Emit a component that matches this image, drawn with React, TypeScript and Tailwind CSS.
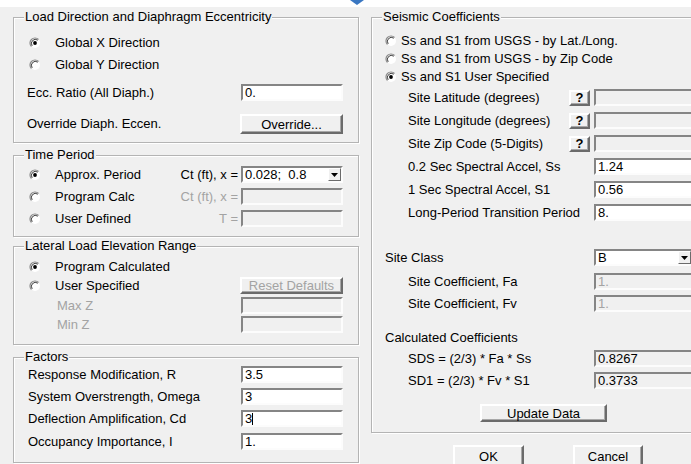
import type { ReactNode } from 'react';

// classic 3D radio button
function Radio({ checked = false }: { checked?: boolean }) {
  return (
    <svg width="12" height="12" viewBox="0 0 12 12" className="shrink-0">
      <circle cx="6" cy="6" r="5" fill="#fff" />
      <path d="M9.54 2.46A5 5 0 0 0 2.46 9.54" fill="none" stroke="#8a8a8a" strokeWidth="1.2" />
      <path d="M8.8 3.2A4 4 0 0 0 3.2 8.8" fill="none" stroke="#404040" strokeWidth="1" />
      {checked && <circle cx="6" cy="6" r="1.9" fill="#000" />}
    </svg>
  );
}

function GroupBox({ title, className, children }: { title: string; className: string; children: ReactNode }) {
  return (
    <fieldset className={`border border-[#b4b4b4] shadow-[inset_1px_1px_0_#fff,1px_1px_0_#fff] px-[10px] ${className}`}>
      <legend className="px-[1px] h-[14px] leading-[14px] bg-[#f0f0f0]">{title}</legend>
      {children}
    </fieldset>
  );
}

function Field({ value = '', disabled = false, width, caret = false }: { value?: string; disabled?: boolean; width: string; caret?: boolean }) {
  return (
    <div
      className={`${width} h-[17px] shrink-0 border-2 border-t-[#858585] border-l-[#858585] border-b-[#fcfcfc] border-r-[#fcfcfc] px-[2px] text-[13px] leading-[13px] flex items-center ${
        disabled ? 'bg-[#f0f0f0] text-[#a3a3a3]' : 'bg-white text-black'
      }`}
    >
      <span>{value}</span>
      {caret && <span className="w-px h-[12px] bg-black" />}
    </div>
  );
}

function Combo({ value, width }: { value: string; width: string }) {
  return (
    <div className={`${width} h-[17px] shrink-0 border-2 border-t-[#858585] border-l-[#858585] border-b-[#fcfcfc] border-r-[#fcfcfc] bg-white flex items-stretch`}>
      <span className="flex-1 pl-[2px] text-[13px] leading-[13px] whitespace-pre">{value}</span>
      <span className="w-[13px] border border-t-white border-l-white border-b-[#6b6b6b] border-r-[#6b6b6b] bg-[#f0f0f0] flex items-center justify-center">
        <svg width="7" height="4" viewBox="0 0 7 4">
          <path d="M0 0H7L3.5 4Z" fill="#000" />
        </svg>
      </span>
    </div>
  );
}

function Button({ label, className, disabled = false }: { label: string; className: string; disabled?: boolean }) {
  return (
    <button
      className={`shrink-0 border-2 border-t-white border-l-white border-b-[#6b6b6b] border-r-[#6b6b6b] shadow-[inset_-1px_-1px_0_#a8a8a8] bg-[#f0f0f0] text-[13px] leading-none flex items-center justify-center ${
        disabled ? 'text-[#a3a3a3]' : 'text-black'
      } ${className}`}
    >
      {label}
    </button>
  );
}

export default function App() {
  return (
    <div className="w-[691px] h-[464px] overflow-hidden bg-[#f0f0f0] text-[13px] text-black font-['Liberation_Sans',Arial,sans-serif] flex flex-col">
      {/* strip above the dialog */}
      <div className="h-[7px] shrink-0 bg-white pl-[350px]">
        <svg width="14" height="5" viewBox="0 0 14 5" className="block">
          <path d="M0 0H14L7 5Z" fill="#3a77c2" />
        </svg>
      </div>

      <div className="flex shrink-0">
        {/* left column */}
        <div className="ml-[13px] w-[346px] shrink-0 flex flex-col">
          <GroupBox title="Load Direction and Diaphragm Eccentricity" className="mt-[3px] pt-[10px] pb-[8px]">
            <div className="pl-[3px] pr-[5px] flex flex-col">
              <div className="h-[18px] flex items-center pl-[2px] gap-[14px]">
                <Radio checked />
                <span>Global X Direction</span>
              </div>
              <div className="h-[18px] mt-[4px] flex items-center pl-[2px] gap-[14px]">
                <Radio />
                <span>Global Y Direction</span>
              </div>
              <div className="h-[17px] mt-[10px] flex items-center justify-between">
                <span>Ecc. Ratio (All Diaph.)</span>
                <Field value="0." width="w-[102px]" />
              </div>
              <div className="h-[20px] mt-[13px] flex items-center justify-between">
                <span>Override Diaph. Eccen.</span>
                <Button label="Override..." className="w-[103px] h-[20px]" />
              </div>
            </div>
          </GroupBox>

          <GroupBox title="Time Period" className="mt-[5px] pt-[4px] pb-[9px]">
            <div className="pl-[3px] pr-[5px] flex flex-col">
              <div className="h-[17px] flex items-center pl-[2px]">
                <Radio checked />
                <span className="ml-[14px] flex-1">Approx. Period</span>
                <span className="mr-[3px]">Ct (ft), x =</span>
                <Combo value="0.028;  0.8" width="w-[102px]" />
              </div>
              <div className="h-[17px] mt-[5px] flex items-center pl-[2px]">
                <Radio />
                <span className="ml-[14px] flex-1">Program Calc</span>
                <span className="mr-[3px] text-[#a3a3a3]">Ct (ft), x =</span>
                <Field disabled width="w-[102px]" />
              </div>
              <div className="h-[17px] mt-[5px] flex items-center pl-[2px]">
                <Radio />
                <span className="ml-[14px] flex-1">User Defined</span>
                <span className="mr-[3px] text-[#a3a3a3]">T =</span>
                <Field disabled width="w-[102px]" />
              </div>
            </div>
          </GroupBox>

          <GroupBox title="Lateral Load Elevation Range" className="mt-[2px] pt-[5px] pb-[11px]">
            <div className="pl-[3px] pr-[5px] flex flex-col">
              <div className="h-[17px] flex items-center pl-[2px] gap-[14px]">
                <Radio checked />
                <span>Program Calculated</span>
              </div>
              <div className="h-[17px] mt-[2px] flex items-center pl-[2px]">
                <Radio />
                <span className="ml-[14px] flex-1">User Specified</span>
                <Button label="Reset Defaults" disabled className="w-[103px] h-[17px]" />
              </div>
              <div className="h-[17px] mt-[3px] flex items-center justify-between">
                <span className="ml-[30px] text-[#a3a3a3]">Max Z</span>
                <Field disabled width="w-[102px]" />
              </div>
              <div className="h-[17px] mt-[2px] flex items-center justify-between">
                <span className="ml-[30px] text-[#a3a3a3]">Min Z</span>
                <Field disabled width="w-[102px]" />
              </div>
            </div>
          </GroupBox>

          <GroupBox title="Factors" className="mt-[5px] pt-[2px] pb-[12px]">
            <div className="pl-[4px] pr-[5px] flex flex-col">
              <div className="h-[17px] flex items-center justify-between">
                <span>Response Modification, R</span>
                <Field value="3.5" width="w-[102px]" />
              </div>
              <div className="h-[17px] mt-[5px] flex items-center justify-between">
                <span>System Overstrength, Omega</span>
                <Field value="3" width="w-[102px]" />
              </div>
              <div className="h-[17px] mt-[5px] flex items-center justify-between">
                <span>Deflection Amplification, Cd</span>
                <Field value="3" caret width="w-[102px]" />
              </div>
              <div className="h-[17px] mt-[6px] flex items-center justify-between">
                <span>Occupancy Importance, I</span>
                <Field value="1." width="w-[102px]" />
              </div>
            </div>
          </GroupBox>
        </div>

        {/* right column */}
        <div className="ml-[12px] w-[345px] shrink-0 flex flex-col">
          <GroupBox title="Seismic Coefficients" className="mt-[3px] pt-[8px] pb-[10px]">
            <div className="flex flex-col">
              <div className="h-[17px] flex items-center pl-[3px] gap-[4px]">
                <Radio />
                <span>Ss and S1 from USGS - by Lat./Long.</span>
              </div>
              <div className="h-[17px] mt-[1px] flex items-center pl-[3px] gap-[4px]">
                <Radio />
                <span>Ss and S1 from USGS - by Zip Code</span>
              </div>
              <div className="h-[17px] mt-[1px] flex items-center pl-[3px] gap-[4px]">
                <Radio checked />
                <span>Ss and S1 User Specified</span>
              </div>

              {[
                ['Site Latitude (degrees)', 'mt-[4px]'],
                ['Site Longitude (degrees)', 'mt-[6px]'],
                ['Site Zip Code (5-Digits)', 'mt-[6px]'],
              ].map(([label, mt]) => (
                <div key={label} className={`h-[17px] ${mt} flex items-center`}>
                  <span className="ml-[26px] flex-1">{label}</span>
                  <Button label="?" className="w-[21px] h-[16px] mr-[4px] font-bold" />
                  <Field disabled width="w-[111px]" />
                </div>
              ))}

              <div className="h-[17px] mt-[6px] flex items-center">
                <span className="ml-[26px] flex-1">0.2 Sec Spectral Accel, Ss</span>
                <Field value="1.24" width="w-[111px]" />
              </div>
              <div className="h-[17px] mt-[6px] flex items-center">
                <span className="ml-[26px] flex-1">1 Sec Spectral Accel, S1</span>
                <Field value="0.56" width="w-[111px]" />
              </div>
              <div className="h-[17px] mt-[6px] flex items-center">
                <span className="ml-[26px] flex-1">Long-Period Transition Period</span>
                <Field value="8." width="w-[111px]" />
              </div>

              <div className="h-[17px] mt-[28px] flex items-center">
                <span className="ml-[3px] flex-1">Site Class</span>
                <div className="mr-[12px]">
                  <Combo value="B" width="w-[99px]" />
                </div>
              </div>
              <div className="h-[17px] mt-[7px] flex items-center">
                <span className="ml-[26px] flex-1">Site Coefficient, Fa</span>
                <Field value="1." disabled width="w-[111px]" />
              </div>
              <div className="h-[17px] mt-[5px] flex items-center">
                <span className="ml-[26px] flex-1">Site Coefficient, Fv</span>
                <Field value="1." disabled width="w-[111px]" />
              </div>

              <div className="h-[17px] mt-[17px] flex items-center">
                <span className="ml-[3px]">Calculated Coefficients</span>
              </div>
              <div className="h-[17px] mt-[4px] flex items-center">
                <span className="ml-[26px] flex-1">SDS = (2/3) * Fa * Ss</span>
                <div className="w-[111px] h-[17px] border-2 border-t-[#858585] border-l-[#858585] border-b-[#fcfcfc] border-r-[#fcfcfc] bg-[#f0f0f0] px-[2px] leading-[13px]">0.8267</div>
              </div>
              <div className="h-[17px] mt-[5px] flex items-center">
                <span className="ml-[26px] flex-1">SD1 = (2/3) * Fv * S1</span>
                <div className="w-[111px] h-[17px] border-2 border-t-[#858585] border-l-[#858585] border-b-[#fcfcfc] border-r-[#fcfcfc] bg-[#f0f0f0] px-[2px] leading-[13px]">0.3733</div>
              </div>

              <div className="mt-[15px] flex justify-center">
                <Button label="Update Data" className="w-[127px] h-[18px]" />
              </div>
            </div>
          </GroupBox>

          <div className="mt-[12px] pl-[82px] flex gap-[49px]">
            <Button label="OK" className="w-[71px] h-[23px] shadow-[inset_-1px_-1px_0_#a8a8a8,0_0_0_1px_#6b6b6b]" />
            <Button label="Cancel" className="w-[70px] h-[23px]" />
          </div>
        </div>
      </div>
    </div>
  );
}
